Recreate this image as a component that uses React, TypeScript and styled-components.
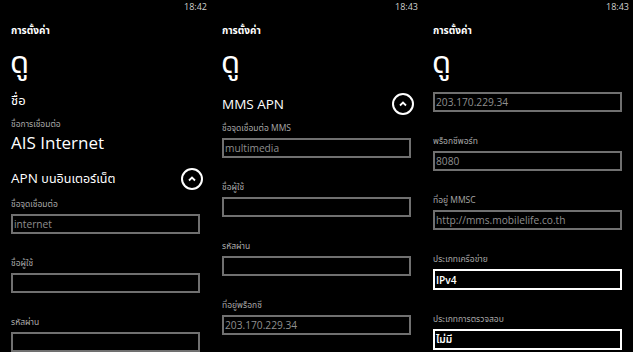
import React from "react";
import styled, { createGlobalStyle } from "styled-components";

const Global = createGlobalStyle`
  html, body { margin: 0; padding: 0; background: #000; }
  body {
    font-family: "Open Sans", "Noto Sans Thai", "Noto Sans Thai UI", "Leelawadee UI", "Tahoma", "Noto Sans", sans-serif;
    color: #fff;
  }
`;

const Screen = styled.div`
  display: grid;
  grid-template-columns: repeat(3, 211px);
  width: 633px;
  height: 352px;
  overflow: hidden;
  background: #000;
`;

const Panel = styled.div`
  display: flex;
  flex-direction: column;
  height: 352px;
  overflow: hidden;
  padding: 0 9px 0 11px;
`;

const StatusBar = styled.div`
  display: flex;
  justify-content: flex-end;
  height: 14px;
  line-height: 14px;
  margin-right: -5px;
  font-size: 9px;
  color: #d0d0d0;
`;

const AppTitle = styled.div`
  margin-top: 9px;
  height: 14px;
  line-height: 14px;
  font-size: 10px;
  font-weight: 700;
`;

const PageTitle = styled.div`
  margin-top: 4px;
  margin-left: -1px;
  height: 40px;
  line-height: 40px;
  font-size: 31px;
`;

const Content = styled.div<{ $top: number }>`
  display: flex;
  flex-direction: column;
  margin-top: ${(p) => p.$top}px;
`;

const NameHeading = styled.div`
  height: 16px;
  line-height: 16px;
  font-size: 13px;
`;

const Label = styled.div<{ $gap?: number }>`
  margin-top: ${(p) => p.$gap ?? 23}px;
  height: 12px;
  line-height: 12px;
  font-size: 8.5px;
  color: #a8a8a8;
`;

const BigValue = styled.div`
  margin-top: 2px;
  height: 22px;
  line-height: 22px;
  font-size: 17px;
`;

const Expander = styled.div<{ $gap?: number }>`
  display: flex;
  align-items: center;
  justify-content: space-between;
  margin-top: ${(p) => p.$gap ?? 0}px;
  margin-right: -1px;
  height: 24px;
  font-size: 13.5px;
`;

const ExpanderText = styled.span`
  white-space: nowrap;
`;

const ThaiText = styled.span`
  font-size: 12.5px;
`;

const Circle = styled.div`
  width: 22px;
  height: 22px;
  box-sizing: border-box;
  border: 2px solid #fff;
  border-radius: 50%;
  display: flex;
  align-items: center;
  justify-content: center;
`;

const Field = styled.div<{ $active?: boolean }>`
  margin-top: 4px;
  box-sizing: border-box;
  width: 189px;
  height: ${(p) => (p.$active ? 21 : 20)}px;
  border: 2px solid ${(p) => (p.$active ? "#fff" : "#707070")};
  padding-left: 1px;
  display: flex;
  align-items: center;
  font-size: 10.2px;
  color: ${(p) => (p.$active ? "#fff" : "#8f8f8f")};
  font-weight: ${(p) => (p.$active ? 600 : 400)};
  white-space: nowrap;
  overflow: hidden;
`;

const Chevron = () => (
  <svg width="10" height="10" viewBox="0 0 10 10">
    <path d="M2 6.5 L5 3.5 L8 6.5" fill="none" stroke="#fff" strokeWidth="1.8" />
  </svg>
);

const Header = ({ time }: { time: string }) => (
  <>
    <StatusBar>{time}</StatusBar>
    <AppTitle>การตั้งค่า</AppTitle>
    <PageTitle>ดู</PageTitle>
  </>
);

const Labeled = ({
  label,
  value,
  active,
  gap,
}: {
  label: string;
  value?: string;
  active?: boolean;
  gap?: number;
}) => (
  <>
    <Label $gap={gap}>{label}</Label>
    <Field $active={active}>{value}</Field>
  </>
);

export default function App() {
  return (
    <>
      <Global />
      <Screen>
        <Panel>
          <Header time="18:42" />
          <Content $top={11}>
            <NameHeading>ชื่อ</NameHeading>
            <Label $gap={10}>ชื่อการเชื่อมต่อ</Label>
            <BigValue>AIS Internet</BigValue>
            <Expander $gap={13}>
              <ExpanderText>
                APN <ThaiText>บนอินเตอร์เน็ต</ThaiText>
              </ExpanderText>
              <Circle>
                <Chevron />
              </Circle>
            </Expander>
            <Labeled gap={7} label="ชื่อจุดเชื่อมต่อ" value="internet" />
            <Labeled label="ชื่อผู้ใช้" />
            <Labeled label="รหัสผ่าน" />
          </Content>
        </Panel>
        <Panel>
          <Header time="18:43" />
          <Content $top={11}>
            <Expander>
              <ExpanderText>MMS APN</ExpanderText>
              <Circle>
                <Chevron />
              </Circle>
            </Expander>
            <Labeled gap={6} label="ชื่อจุดเชื่อมต่อ MMS" value="multimedia" />
            <Labeled label="ชื่อผู้ใช้" />
            <Labeled label="รหัสผ่าน" />
            <Labeled label="ที่อยู่พร็อกซี" value="203.170.229.34" />
          </Content>
        </Panel>
        <Panel>
          <Header time="18:43" />
          <Content $top={7}>
            <Field>203.170.229.34</Field>
            <Labeled label="พร็อกซีพอร์ท" value="8080" />
            <Labeled label="ที่อยู่ MMSC" value="http://mms.mobilelife.co.th" />
            <Labeled label="ประเภทเครือข่าย" value="IPv4" active />
            <Labeled label="ประเภทการตรวจสอบ" value="ไม่มี" active />
          </Content>
        </Panel>
      </Screen>
    </>
  );
}
